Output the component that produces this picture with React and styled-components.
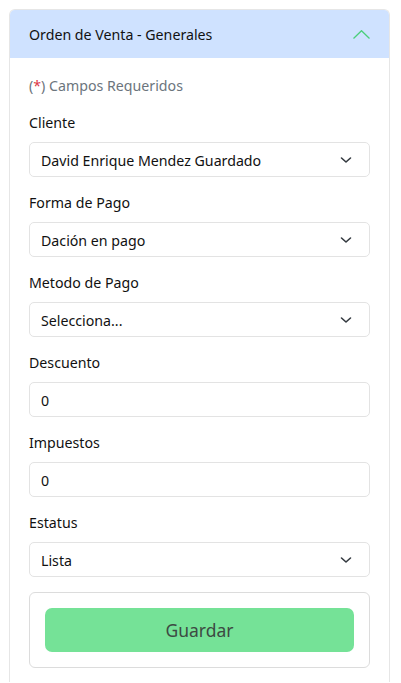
import React from "react";
import styled, { createGlobalStyle } from "styled-components";

const Global = createGlobalStyle`
  * { box-sizing: border-box; }
  body {
    margin: 0;
    padding: 9px 11px 0 9px;
    background: #fff;
    font-family: "Noto Sans", "Open Sans", sans-serif;
    color: #212529;
  }
`;

const Card = styled.div`
  width: 381px;
  border: 1px solid #e6e6e6;
  border-bottom: none;
  border-radius: 6px 6px 0 0;
  overflow: hidden;
`;

const Header = styled.div`
  height: 48px;
  background: #cfe2ff;
  display: flex;
  align-items: center;
  justify-content: space-between;
  padding: 0 19px 0 19px;
  font-size: 14.2px;
  color: #111;
`;

const Body = styled.div`
  padding: 17px 19px 14px 19px;
  display: flex;
  flex-direction: column;
`;

const Required = styled.div`
  font-size: 14.2px;
  color: #6c757d;
  line-height: 22px;
  margin-bottom: 15px;
`;

const Star = styled.span`
  color: #dc3545;
`;

const Field = styled.div`
  display: flex;
  flex-direction: column;
  margin-bottom: 15px;
`;

const Label = styled.label`
  font-size: 14.2px;
  line-height: 22px;
  margin-bottom: 8px;
  color: #111;
`;

const Control = styled.div`
  height: 35px;
  border: 1px solid #e3e3e3;
  border-radius: 5px;
  display: flex;
  align-items: center;
  justify-content: space-between;
  padding: 1px 17px 0 11px;
  font-size: 14.2px;
  color: #111;
  background: #fff;
`;

const ButtonBox = styled.div`
  border: 1px solid #dcdcdc;
  border-radius: 6px;
  padding: 15px;
`;

const SaveButton = styled.button`
  display: block;
  width: 100%;
  height: 44px;
  border: none;
  border-radius: 7px;
  background: #75e297;
  color: #3d4a43;
  font-family: inherit;
  font-size: 17.5px;
`;

const Down = () => (
  <svg width="12" height="8" viewBox="0 0 12 8">
    <path d="M1.5 2 L6 6 L10.5 2" fill="none" stroke="#343a40" strokeWidth="1.6" strokeLinecap="round" strokeLinejoin="round" />
  </svg>
);

const Up = () => (
  <svg width="17" height="9" viewBox="0 0 17 9">
    <path d="M0.5 8.5 L8.5 0.7 L16.5 8.5" fill="none" stroke="#4ccf7c" strokeWidth="1.3" />
  </svg>
);

const fields = [
  { label: "Cliente", value: "David Enrique Mendez Guardado", select: true },
  { label: "Forma de Pago", value: "Dación en pago", select: true },
  { label: "Metodo de Pago", value: "Selecciona...", select: true },
  { label: "Descuento", value: "0" },
  { label: "Impuestos", value: "0" },
  { label: "Estatus", value: "Lista", select: true },
];

export default function App() {
  return (
    <>
      <Global />
      <Card>
        <Header>
          <span>Orden de Venta - Generales</span>
          <Up />
        </Header>
        <Body>
          <Required>(<Star>*</Star>) Campos Requeridos</Required>
          {fields.map((f) => (
            <Field key={f.label}>
              <Label>{f.label}</Label>
              <Control>
                <span>{f.value}</span>
                {f.select && <Down />}
              </Control>
            </Field>
          ))}
          <ButtonBox>
            <SaveButton>Guardar</SaveButton>
          </ButtonBox>
        </Body>
      </Card>
    </>
  );
}
